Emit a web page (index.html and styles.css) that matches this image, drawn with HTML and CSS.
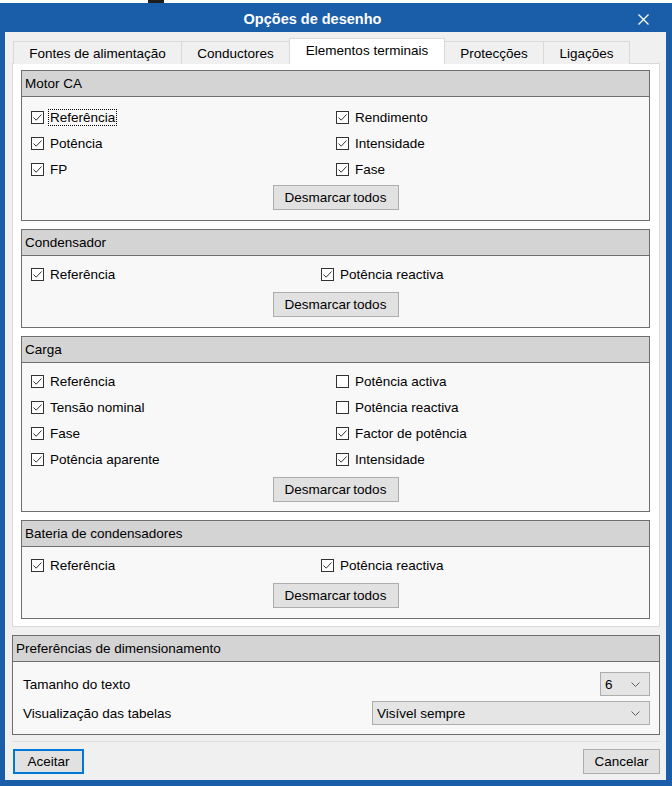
FILE: index.html
```html
<!DOCTYPE html>
<html lang="pt">
<head>
<meta charset="utf-8">
<title>Opções de desenho</title>
<link rel="stylesheet" href="styles.css">
</head>
<body>
<div class="topstrip"><span class="ts-a"></span><span class="ts-b"></span><span class="ts-c"></span></div>
<div class="window">
  <div class="titlebar">
    <div class="title">Opções de desenho</div>
    <div class="close"><svg width="11" height="11" viewBox="0 0 11 11"><path d="M0.5 0.5L10.5 10.5M10.5 0.5L0.5 10.5" stroke="#fff" stroke-width="1.3" fill="none"/></svg></div>
  </div>
  <div class="body">
    <div class="tabs">
      <div class="tab w1">Fontes de alimentação</div>
      <div class="tab w2">Conductores</div>
      <div class="tab w3 sel">Elementos terminais</div>
      <div class="tab w4">Protecções</div>
      <div class="tab w5">Ligações</div>
    </div>
    <div class="panel">
      <section class="group">
        <div class="ghead">Motor CA</div>
        <div class="gbody first">
          <div class="checks wide">
            <div class="chk"><span class="box"><svg width="11" height="11" viewBox="0 0 11 11"><path d="M1.5 5.5L4.2 8.2L9.5 2.5" stroke="#333" stroke-width="1" fill="none"/></svg></span><span class="lbl focus">Referência</span></div>
            <div class="chk"><span class="box"><svg width="11" height="11" viewBox="0 0 11 11"><path d="M1.5 5.5L4.2 8.2L9.5 2.5" stroke="#333" stroke-width="1" fill="none"/></svg></span><span class="lbl">Rendimento</span></div>
            <div class="chk"><span class="box"><svg width="11" height="11" viewBox="0 0 11 11"><path d="M1.5 5.5L4.2 8.2L9.5 2.5" stroke="#333" stroke-width="1" fill="none"/></svg></span><span class="lbl">Potência</span></div>
            <div class="chk"><span class="box"><svg width="11" height="11" viewBox="0 0 11 11"><path d="M1.5 5.5L4.2 8.2L9.5 2.5" stroke="#333" stroke-width="1" fill="none"/></svg></span><span class="lbl">Intensidade</span></div>
            <div class="chk"><span class="box"><svg width="11" height="11" viewBox="0 0 11 11"><path d="M1.5 5.5L4.2 8.2L9.5 2.5" stroke="#333" stroke-width="1" fill="none"/></svg></span><span class="lbl">FP</span></div>
            <div class="chk"><span class="box"><svg width="11" height="11" viewBox="0 0 11 11"><path d="M1.5 5.5L4.2 8.2L9.5 2.5" stroke="#333" stroke-width="1" fill="none"/></svg></span><span class="lbl">Fase</span></div>
          </div>
          <div class="btnrow"><button class="btn wbtn">Desmarcar todos</button></div>
        </div>
      </section>
      <section class="group">
        <div class="ghead">Condensador</div>
        <div class="gbody">
          <div class="checks narrow">
            <div class="chk"><span class="box"><svg width="11" height="11" viewBox="0 0 11 11"><path d="M1.5 5.5L4.2 8.2L9.5 2.5" stroke="#333" stroke-width="1" fill="none"/></svg></span><span class="lbl">Referência</span></div>
            <div class="chk"><span class="box"><svg width="11" height="11" viewBox="0 0 11 11"><path d="M1.5 5.5L4.2 8.2L9.5 2.5" stroke="#333" stroke-width="1" fill="none"/></svg></span><span class="lbl">Potência reactiva</span></div>
          </div>
          <div class="btnrow"><button class="btn wbtn">Desmarcar todos</button></div>
        </div>
      </section>
      <section class="group">
        <div class="ghead">Carga</div>
        <div class="gbody third">
          <div class="checks wide">
            <div class="chk"><span class="box"><svg width="11" height="11" viewBox="0 0 11 11"><path d="M1.5 5.5L4.2 8.2L9.5 2.5" stroke="#333" stroke-width="1" fill="none"/></svg></span><span class="lbl">Referência</span></div>
            <div class="chk"><span class="box"></span><span class="lbl">Potência activa</span></div>
            <div class="chk"><span class="box"><svg width="11" height="11" viewBox="0 0 11 11"><path d="M1.5 5.5L4.2 8.2L9.5 2.5" stroke="#333" stroke-width="1" fill="none"/></svg></span><span class="lbl">Tensão nominal</span></div>
            <div class="chk"><span class="box"></span><span class="lbl">Potência reactiva</span></div>
            <div class="chk"><span class="box"><svg width="11" height="11" viewBox="0 0 11 11"><path d="M1.5 5.5L4.2 8.2L9.5 2.5" stroke="#333" stroke-width="1" fill="none"/></svg></span><span class="lbl">Fase</span></div>
            <div class="chk"><span class="box"><svg width="11" height="11" viewBox="0 0 11 11"><path d="M1.5 5.5L4.2 8.2L9.5 2.5" stroke="#333" stroke-width="1" fill="none"/></svg></span><span class="lbl">Factor de potência</span></div>
            <div class="chk"><span class="box"><svg width="11" height="11" viewBox="0 0 11 11"><path d="M1.5 5.5L4.2 8.2L9.5 2.5" stroke="#333" stroke-width="1" fill="none"/></svg></span><span class="lbl">Potência aparente</span></div>
            <div class="chk"><span class="box"><svg width="11" height="11" viewBox="0 0 11 11"><path d="M1.5 5.5L4.2 8.2L9.5 2.5" stroke="#333" stroke-width="1" fill="none"/></svg></span><span class="lbl">Intensidade</span></div>
          </div>
          <div class="btnrow"><button class="btn wbtn">Desmarcar todos</button></div>
        </div>
      </section>
      <section class="group">
        <div class="ghead">Bateria de condensadores</div>
        <div class="gbody">
          <div class="checks narrow">
            <div class="chk"><span class="box"><svg width="11" height="11" viewBox="0 0 11 11"><path d="M1.5 5.5L4.2 8.2L9.5 2.5" stroke="#333" stroke-width="1" fill="none"/></svg></span><span class="lbl">Referência</span></div>
            <div class="chk"><span class="box"><svg width="11" height="11" viewBox="0 0 11 11"><path d="M1.5 5.5L4.2 8.2L9.5 2.5" stroke="#333" stroke-width="1" fill="none"/></svg></span><span class="lbl">Potência reactiva</span></div>
          </div>
          <div class="btnrow"><button class="btn wbtn">Desmarcar todos</button></div>
        </div>
      </section>
    </div>
    <section class="group pref">
      <div class="ghead phead">Preferências de dimensionamento</div>
      <div class="pbody">
        <div class="prow">
          <span class="plabel">Tamanho do texto</span>
          <div class="select s-small"><span>6</span><svg width="9" height="5" viewBox="0 0 9 5"><path d="M0.5 0.5L4.5 4.5L8.5 0.5" stroke="#606060" stroke-width="1" fill="none"/></svg></div>
        </div>
        <div class="prow">
          <span class="plabel">Visualização das tabelas</span>
          <div class="select s-large"><span>Visível sempre</span><svg width="9" height="5" viewBox="0 0 9 5"><path d="M0.5 0.5L4.5 4.5L8.5 0.5" stroke="#606060" stroke-width="1" fill="none"/></svg></div>
        </div>
      </div>
    </section>
    <div class="footer">
      <button class="btn b-ok">Aceitar</button>
      <button class="btn b-cancel">Cancelar</button>
    </div>
  </div>
</div>
</body>
</html>
```
FILE: styles.css
```css
html, body {
  margin: 0;
  padding: 0;
}
body {
  background: #ffffff;
  font-family: "Liberation Sans", Arial, sans-serif;
  font-size: 13.5px;
  color: #000;
  width: 672px;
  height: 786px;
  overflow: hidden;
}
.topstrip {
  display: flex;
  height: 3px;
}
.ts-a { width: 148px; background: #fff; }
.ts-b { width: 16px; background: #1e1e1e; }
.ts-c { flex: 1; background: #fff; }

.window {
  background: #1a5da8;
  padding: 0 6px 6px 5px;
  height: 783px;
  box-sizing: border-box;
  display: flex;
  flex-direction: column;
}
.titlebar {
  height: 29px;
  display: flex;
  align-items: center;
  color: #fff;
}
.title {
  flex: 1;
  text-align: center;
  font-weight: bold;
  font-size: 14.5px;
  padding-top: 3px;
}
.close {
  width: 46px;
  display: flex;
  justify-content: center;
  align-items: center;
  padding-top: 3px;
}
.body {
  flex: 1;
  background: #f0f0f0;
  padding: 6px 6px 0 7px;
  display: flex;
  flex-direction: column;
}
.tabs {
  display: flex;
  align-items: flex-end;
  height: 26px;
  margin-left: 1px;
  margin-bottom: -1px;
  position: relative;
  z-index: 1;
}
.tab {
  height: 23px;
  box-sizing: border-box;
  border: 1px solid #d9d9d9;
  border-bottom: none;
  background: #f0f0f0;
  display: flex;
  align-items: center;
  justify-content: center;
  margin-left: -1px;
  padding-top: 1px;
}
.tab:first-child { margin-left: 0; }
.tab.sel {
  height: 26px;
  background: #ffffff;
  padding-top: 0;
  padding-bottom: 2px;
}
.w1 { width: 169px; }
.w2 { width: 109px; }
.w3 { width: 156px; }
.w4 { width: 100px; }
.w5 { width: 87px; }

.panel {
  background: #ffffff;
  border: 1px solid #d9d9d9;
  padding: 6px 9px 7px 8px;
  display: flex;
  flex-direction: column;
  gap: 8px;
}
.group {
  border: 1px solid #6e6e6e;
  background: #f8f8f8;
}
.ghead {
  height: 25px;
  border-bottom: 1px solid #6e6e6e;
  background: #d4d4d4;
  display: flex;
  align-items: center;
  padding-left: 3px;
}
.gbody {
  padding: 5px 0 10px 0;
}
.gbody.first {
  padding-top: 7px;
}
.gbody.first .btnrow {
  margin-top: 3px;
}
.gbody.third {
  padding-bottom: 9px;
}
.checks {
  display: grid;
  padding-left: 9px;
}
.checks.wide { grid-template-columns: 305px 1fr; }
.checks.narrow { grid-template-columns: 290px 1fr; }
.chk {
  height: 26px;
  display: flex;
  align-items: center;
}
.box {
  width: 13px;
  height: 13px;
  box-sizing: border-box;
  border: 1px solid #333;
  background: #fff;
  display: flex;
  align-items: center;
  justify-content: center;
  margin-right: 5px;
}
.box svg { display: block; }
.lbl { padding: 0 1px; line-height: 15px; }
.lbl.focus { outline: 1px dotted #000; outline-offset: 0; }
.btnrow {
  display: flex;
  justify-content: center;
  margin-top: 5px;
}
.btn {
  font-family: "Liberation Sans", Arial, sans-serif;
  font-size: 13.5px;
  color: #000;
  background: #e1e1e1;
  border: 1px solid #adadad;
  height: 25px;
  padding: 0;
  margin: 0;
  box-sizing: border-box;
}
.wbtn { width: 126px; word-spacing: -1px; }

.pref {
  margin-top: 8px;
}
.phead { padding-left: 3px; }
.pbody {
  padding: 10px 9px 9px 10px;
  display: flex;
  flex-direction: column;
  gap: 5px;
}
.prow {
  height: 24px;
  display: flex;
  align-items: center;
  justify-content: space-between;
}
.select {
  height: 24px;
  box-sizing: border-box;
  border: 1px solid #adadad;
  background: #e5e5e5;
  display: flex;
  align-items: center;
  justify-content: space-between;
  padding: 0 9px 0 4px;
}
.s-small { width: 50px; }
.s-large { width: 278px; }
.select svg { display: block; }

.footer {
  margin-top: 6px;
  border-top: 1px solid #dedede;
  padding-top: 7px;
  display: flex;
  justify-content: space-between;
  align-items: flex-start;
}
.b-ok {
  width: 71px;
  margin-left: 1px;
  border: 2px solid #0078d7;
}
.b-cancel { width: 77px; }
```
